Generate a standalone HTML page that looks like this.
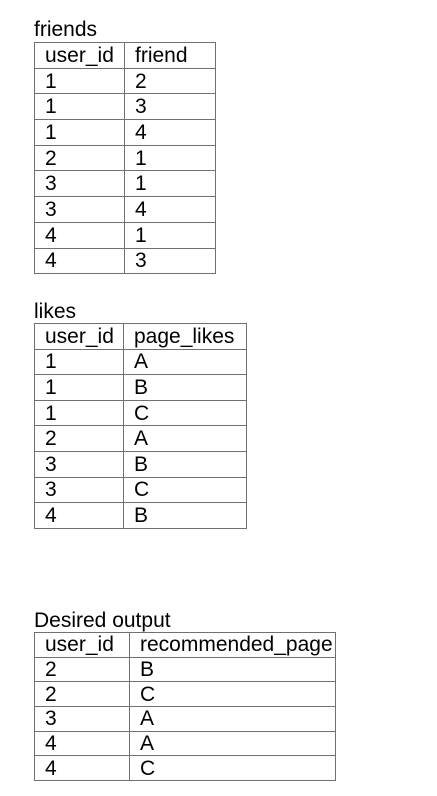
<!DOCTYPE html>
<html><head><style>
body{margin:0;width:437px;height:796px;background:#fff;position:relative;font-family:"Liberation Sans",Arial,sans-serif;color:#000;}
.lbl{position:absolute;left:34px;font-size:21px;line-height:21px;}
table{position:absolute;left:34px;border-collapse:collapse;font-size:21px;table-layout:fixed;}
td{border:1.3px solid #707070;padding:0 0 0 10px;line-height:21px;vertical-align:middle;white-space:nowrap;overflow:hidden;}
</style></head><body>
<div class="lbl" style="top:19px">friends</div>
<table style="top:42px;width:182px">
<colgroup><col style="width:90px"><col></colgroup>
<tr style="height:25.7px"><td>user_id</td><td>friend</td></tr>
<tr style="height:25.7px"><td>1</td><td>2</td></tr>
<tr style="height:25.7px"><td>1</td><td>3</td></tr>
<tr style="height:25.7px"><td>1</td><td>4</td></tr>
<tr style="height:25.7px"><td>2</td><td>1</td></tr>
<tr style="height:25.7px"><td>3</td><td>1</td></tr>
<tr style="height:25.7px"><td>3</td><td>4</td></tr>
<tr style="height:25.7px"><td>4</td><td>1</td></tr>
<tr style="height:25.7px"><td>4</td><td>3</td></tr>
</table>
<div class="lbl" style="top:301px">likes</div>
<table style="top:323px;width:213px">
<colgroup><col style="width:89px"><col></colgroup>
<tr style="height:25.6px"><td>user_id</td><td>page_likes</td></tr>
<tr style="height:25.6px"><td>1</td><td>A</td></tr>
<tr style="height:25.6px"><td>1</td><td>B</td></tr>
<tr style="height:25.6px"><td>1</td><td>C</td></tr>
<tr style="height:25.6px"><td>2</td><td>A</td></tr>
<tr style="height:25.6px"><td>3</td><td>B</td></tr>
<tr style="height:25.6px"><td>3</td><td>C</td></tr>
<tr style="height:25.6px"><td>4</td><td>B</td></tr>
</table>
<div class="lbl" style="top:610px">Desired output</div>
<table style="top:632px;width:302px">
<colgroup><col style="width:95px"><col></colgroup>
<tr style="height:24.7px"><td>user_id</td><td>recommended_page</td></tr>
<tr style="height:24.7px"><td>2</td><td>B</td></tr>
<tr style="height:24.7px"><td>2</td><td>C</td></tr>
<tr style="height:24.7px"><td>3</td><td>A</td></tr>
<tr style="height:24.7px"><td>4</td><td>A</td></tr>
<tr style="height:24.7px"><td>4</td><td>C</td></tr>
</table>
</body></html>
